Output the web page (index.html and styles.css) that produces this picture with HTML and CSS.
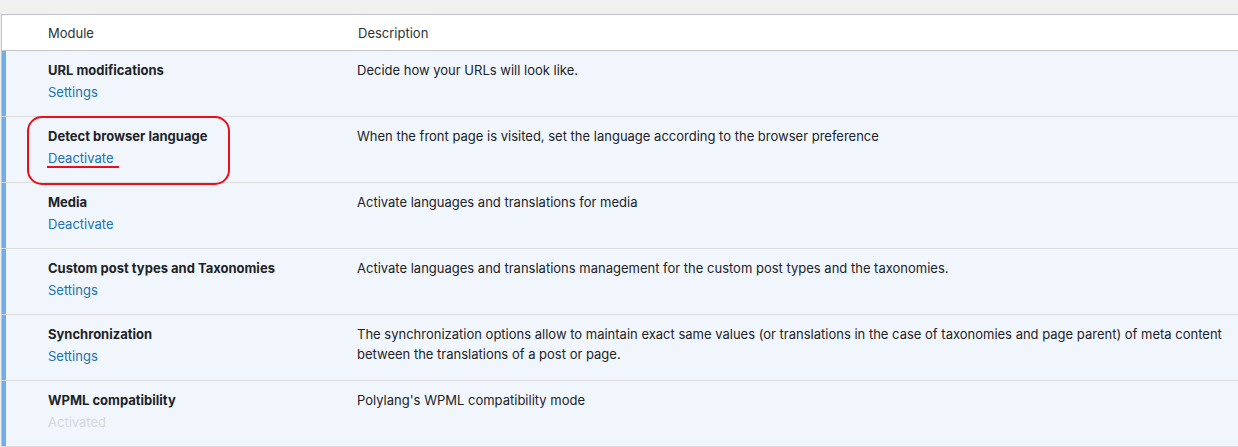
FILE: index.html
```html
<!DOCTYPE html>
<html>
<head>
<meta charset="utf-8">
<link rel="stylesheet" href="styles.css">
</head>
<body>
<div class="page">
  <table class="modules">
    <thead>
      <tr>
        <td class="check"></td>
        <th class="col-name">Module</th>
        <th class="col-desc">Description</th>
      </tr>
    </thead>
    <tbody>
      <tr>
        <th class="check"></th>
        <td class="col-name"><strong>URL modifications</strong><div class="actions"><a href="#">Settings</a></div></td>
        <td class="col-desc">Decide how your URLs will look like.</td>
      </tr>
      <tr>
        <th class="check"></th>
        <td class="col-name"><strong>Detect browser language</strong><div class="actions"><a href="#">Deactivate</a></div></td>
        <td class="col-desc">When the front page is visited, set the language according to the browser preference</td>
      </tr>
      <tr>
        <th class="check"></th>
        <td class="col-name"><strong>Media</strong><div class="actions"><a href="#">Deactivate</a></div></td>
        <td class="col-desc">Activate languages and translations for media</td>
      </tr>
      <tr>
        <th class="check"></th>
        <td class="col-name"><strong>Custom post types and Taxonomies</strong><div class="actions"><a href="#">Settings</a></div></td>
        <td class="col-desc">Activate languages and translations management for the custom post types and the taxonomies.</td>
      </tr>
      <tr>
        <th class="check"></th>
        <td class="col-name"><strong>Synchronization</strong><div class="actions"><a href="#">Settings</a></div></td>
        <td class="col-desc">The synchronization options allow to maintain exact same values (or translations in the case of taxonomies and page parent) of meta content between the translations of a post or page.</td>
      </tr>
      <tr>
        <th class="check"></th>
        <td class="col-name"><strong>WPML compatibility</strong><div class="actions"><span class="muted">Activated</span></div></td>
        <td class="col-desc">Polylang's WPML compatibility mode</td>
      </tr>
    </tbody>
  </table>
  <div class="annot-box"></div>
  <div class="annot-line"></div>
</div>
</body>
</html>
```

FILE: styles.css
```css
html, body {
  margin: 0;
  padding: 0;
  background: #f0f0f1;
  overflow: hidden;
}
body {
  font-family: Inter, "Liberation Sans", Arial, sans-serif;
  font-size: 13px;
  color: #1d2327;
}
.page {
  position: relative;
  padding-top: 14px;
  padding-left: 1px;
}
.modules {
  width: 1270px;
  border-collapse: collapse;
  border: 1px solid #c3c4c7;
  background: #fff;
  table-layout: fixed;
}
.modules thead tr {
  border-bottom: 1px solid #c3c4c7;
}
.modules thead th,
.modules thead td {
  font-weight: 400;
  text-align: left;
  color: #2c3338;
  height: 35px;
  padding: 0 10px;
  line-height: 20px;
  vertical-align: middle;
}
.modules .check {
  width: 16px;
  padding: 0 10px;
}
.modules .col-name {
  width: 290px;
}
.modules tbody tr {
  background: #f0f6fc;
  border-bottom: 1px solid #dcdcde;
}
.modules tbody td {
  vertical-align: top;
  padding: 9px 10px 0;
  height: 56px;
  line-height: 20px;
}
.modules tbody th.check {
  box-shadow: inset 4px 0 0 #72aee6;
  padding: 0;
  width: 36px;
}
.modules thead td.check {
  width: 16px;
}
.modules tbody td.col-desc {
  padding-left: 9px;
  padding-right: 20px;
}
.modules strong {
  font-weight: 700;
  color: #1d2327;
}
.actions {
  padding-top: 2px;
}
.actions a {
  color: #2271b1;
  text-decoration: none;
}
.muted {
  color: #d7d8da;
}
.annot-box {
  position: absolute;
  left: 27px;
  top: 116px;
  width: 199px;
  height: 65px;
  border: 2px solid #e8101a;
  border-radius: 15px;
}
.annot-line {
  position: absolute;
  left: 47px;
  top: 166px;
  width: 72px;
  height: 2px;
  background: #e8101a;
}
```
